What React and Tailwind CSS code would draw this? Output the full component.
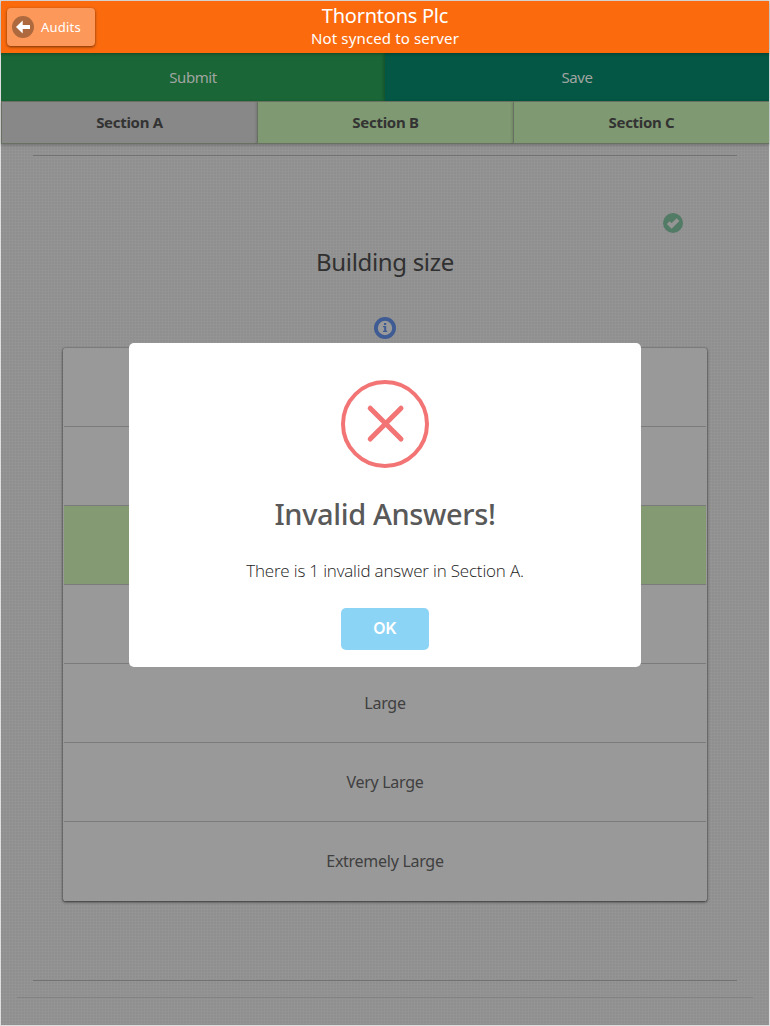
import React from "react";

const answers = [
  { label: "" },
  { label: "" },
  { label: "", selected: true },
  { label: "" },
  { label: "Large" },
  { label: "Very Large" },
  { label: "Extremely Large" },
];

function BackIcon() {
  return (
    <svg className="h-[22px] w-[22px]" viewBox="0 0 22 22">
      <circle cx="11" cy="11" r="11" fill="#ae6a3e" />
      <path d="M4 11 L10.7 4.6 V8.9 H18 V13.1 H10.7 V17.4 Z" fill="#fff" />
    </svg>
  );
}

function CheckIcon() {
  return (
    <svg className="h-5 w-5" viewBox="0 0 20 20">
      <circle cx="10" cy="10" r="10" fill="#527b66" />
      <path d="M5.2 9.6 L8.6 13 L15 6.6" fill="none" stroke="#959595" strokeWidth="3.9" />
    </svg>
  );
}

function InfoIcon() {
  return (
    <svg className="h-[22px] w-[22px]" viewBox="0 0 22 22">
      <circle cx="11" cy="11" r="9.1" fill="#999" stroke="#3e5b94" strokeWidth="3.8" />
      <path d="M10 6h2.2v2H10zM9 9h3.2v4.8H13.2V15H9v-1.2h1.2v-3.6H9z" fill="#3e5b94" />
    </svg>
  );
}

function ErrorIcon() {
  return (
    <svg className="h-[88px] w-[88px]" viewBox="0 0 88 88" fill="none" stroke="#f27474">
      <circle cx="44" cy="44" r="42" strokeWidth="4" />
      <path d="M29.2 28.2 L60 59 M60 28.2 L29.2 59" strokeWidth="5" strokeLinecap="round" />
    </svg>
  );
}

function Tab({ children, active }) {
  return (
    <div
      className={
        "flex flex-1 items-center justify-center border border-r-0 border-[#687161] text-[15px] font-bold text-[#333] shadow-[0_1px_3px_rgba(0,0,0,0.25)] " +
        (active ? "bg-[#888]" : "bg-[#7f9972]")
      }
    >
      <span className="tracking-[-0.3px]">{children}</span>
    </div>
  );
}

export default function App() {
  return (
    <div className="relative flex h-[1026px] w-[770px] flex-col border border-[#dedede] bg-[#949494] bg-[radial-gradient(circle_at_1px_1px,#8e8e8e_0.6px,transparent_1px)] bg-[length:3px_3px] font-['Noto_Sans',sans-serif]">
      <header className="relative z-10 flex h-[52px] shrink-0 justify-center bg-[#fb6b0e] text-white shadow-[0_1px_3px_rgba(0,0,0,0.3)]">
        <button className="absolute left-1.5 top-[7px] flex h-[38px] w-[88px] items-center rounded-[4px] bg-[#fd985b] pl-[5px] text-[13px] shadow-[0_1px_3px_rgba(0,0,0,0.55)]">
          <BackIcon />
          <span className="ml-[7px] mt-px tracking-[0.2px]">Audits</span>
        </button>
        <div className="flex flex-col items-center">
          <h1 className="mt-[2px] text-[20px] leading-[26px] tracking-[-0.25px]">Thorntons Plc</h1>
          <p className="text-[15px] leading-[18px] tracking-[0.14px]">Not synced to server</p>
        </div>
      </header>

      <div className="flex h-12 shrink-0 text-[15px] text-[#a0a5a1]">
        <div className="flex flex-1 items-center justify-center bg-[#1a6636]">
          <span className="tracking-[-0.4px]">Submit</span>
        </div>
        <div className="flex flex-1 items-center justify-center bg-[#045744] shadow-[-1px_0_3px_rgba(0,0,0,0.25)]">
          <span className="tracking-[-0.4px]">Save</span>
        </div>
      </div>

      <nav className="flex h-[43px] shrink-0">
        <Tab active>Section A</Tab>
        <Tab>Section B</Tab>
        <Tab>Section C</Tab>
      </nav>

      <main className="flex flex-1 flex-col">
        <div className="mx-8 mt-[11px] h-px shrink-0 bg-[#727272]" />
        <div className="mr-[86px] mt-[57px] flex justify-end">
          <CheckIcon />
        </div>
        <h2 className="mt-[12px] text-center text-[24px] leading-[34px] tracking-[-0.33px] text-[#303030]">Building size</h2>
        <div className="mt-[38px] flex justify-center">
          <InfoIcon />
        </div>
        <ul className="mx-[62px] mt-[9px] shrink-0 rounded-[2px] bg-[#999] shadow-[0_1px_3px_rgba(0,0,0,0.65),0_0_1px_rgba(0,0,0,0.5)]">
          {answers.map((answer, i) => (
            <li
              key={i}
              className={
                "mx-px flex h-[79px] items-center justify-center border-b border-[#7b7b7b] text-[16px] tracking-[-0.28px] text-[#404040] last:border-[#999] " +
                (answer.selected ? "bg-[#849a73]" : "")
              }
            >
              {answer.label}
            </li>
          ))}
        </ul>
        <div className="mx-8 mt-[79px] h-px shrink-0 bg-[#727272]" />
        <div className="mx-4 mt-4 h-px shrink-0 bg-[#828282]" />
      </main>

      <div
        role="alertdialog"
        className="absolute left-32 top-[342px] z-20 flex h-[324px] w-[512px] flex-col items-center rounded-[5px] bg-white"
      >
        <div className="mt-[37px]">
          <ErrorIcon />
        </div>
        <h3 className="mt-[26px] text-[29px] font-medium leading-10 tracking-[-0.38px] text-[#595959]">Invalid Answers!</h3>
        <p className="mt-[25px] font-['Open_Sans',sans-serif] text-[17px] font-light leading-6 tracking-[-0.18px] text-[#222]">
          There is 1 invalid answer in Section A.
        </p>
        <button className="mt-[25px] h-[42px] w-[88px] rounded-[5px] bg-[#8cd4f5] pb-[2px] font-['Inter',sans-serif] text-[16px] font-semibold text-white">
          OK
        </button>
      </div>
    </div>
  );
}
